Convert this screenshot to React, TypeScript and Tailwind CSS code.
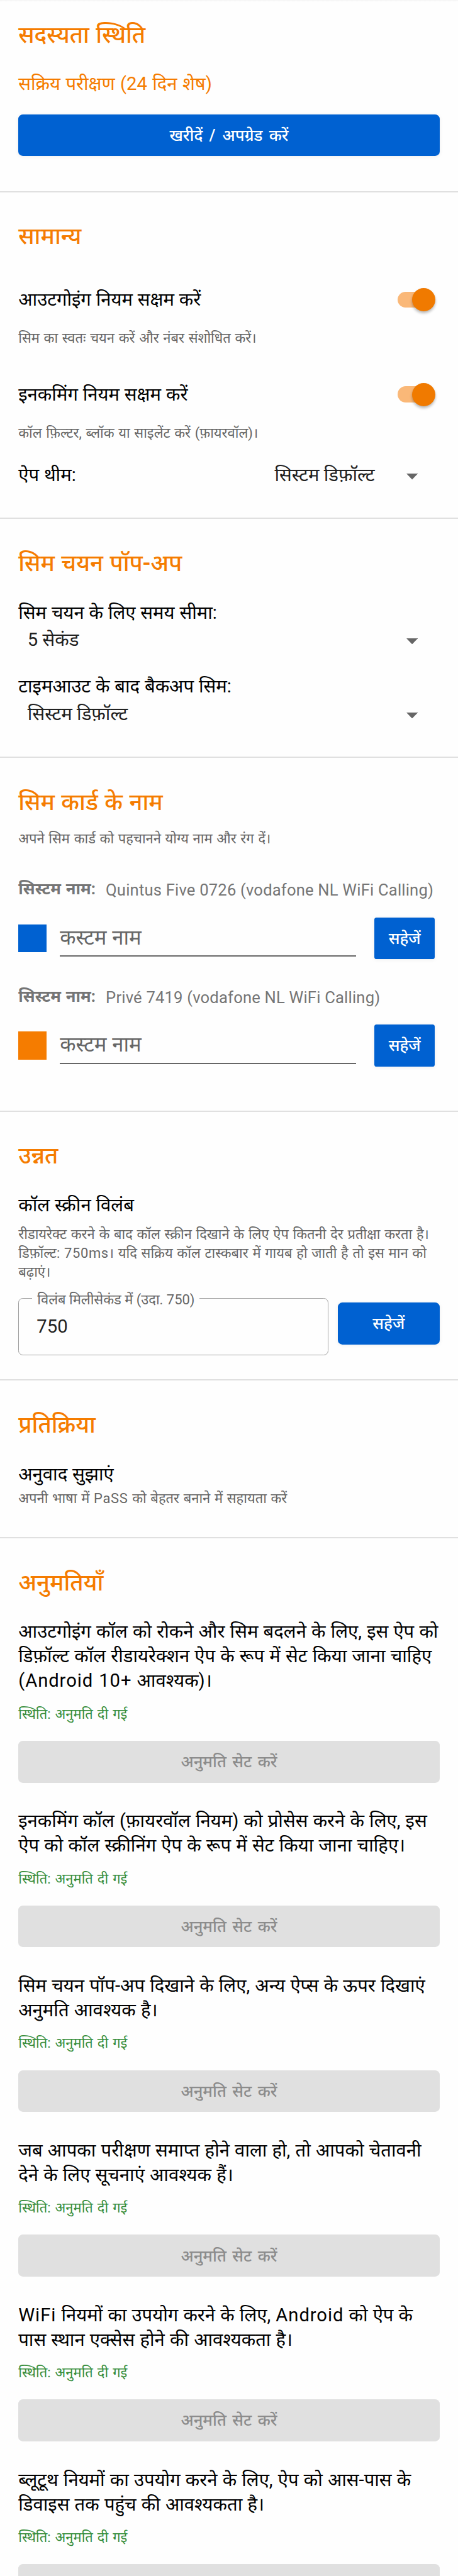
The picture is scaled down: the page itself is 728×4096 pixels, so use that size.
import type { ReactNode } from 'react'
import clsx from 'clsx'

const permissions: ReactNode[] = [
  <>
    आउटगोइंग कॉल को रोकने और सिम बदलने के लिए, इस ऐप को
    <br />
    डिफ़ॉल्ट कॉल रीडायरेक्शन ऐप के रूप में सेट किया जाना चाहिए
    <br />
    <Latin>(Android 10+</Latin> आवश्यक)।
  </>,
  <>
    इनकमिंग कॉल (फ़ायरवॉल नियम) को प्रोसेस करने के लिए, इस
    <br />
    ऐप को कॉल स्क्रीनिंग ऐप के रूप में सेट किया जाना चाहिए।
  </>,
  <>
    सिम चयन पॉप-अप दिखाने के लिए, अन्य ऐप्स के ऊपर दिखाएं
    <br />
    अनुमति आवश्यक है।
  </>,
  <>
    जब आपका परीक्षण समाप्त होने वाला हो, तो आपको चेतावनी
    <br />
    देने के लिए सूचनाएं आवश्यक हैं।
  </>,
  <>
    <Latin>WiFi</Latin> नियमों का उपयोग करने के लिए, <Latin>Android</Latin> को ऐप के
    <br />
    पास स्थान एक्सेस होने की आवश्यकता है।
  </>,
  <>
    ब्लूटूथ नियमों का उपयोग करने के लिए, ऐप को आस-पास के
    <br />
    डिवाइस तक पहुंच की आवश्यकता है।
  </>,
]

// Letter spacing only applies to latin runs, devanagari has to stay connected
function Latin({ children }: { children: ReactNode }) {
  return <span className="tracking-[0.031em]">{children}</span>
}

function Section({ className, title, children }: { className?: string; title: string; children: ReactNode }) {
  return (
    <section className={clsx('border-b-2 border-[#e0e0e0] px-[29.25px]', className)}>
      <h2 className="text-[36.56px] leading-[44px] font-medium text-[#f57c00] [word-spacing:1.4px]">{title}</h2>
      {children}
    </section>
  )
}

function Label({ className, children }: { className?: string; children: ReactNode }) {
  return (
    <p className={clsx('text-[29.25px] leading-[39px] text-black [word-spacing:0.6px]', className)}>{children}</p>
  )
}

function Hint({ className, children }: { className?: string; children: ReactNode }) {
  return (
    <p className={clsx('text-[21.94px] leading-[29.7px] text-[#666666] [word-spacing:1.25px]', className)}>
      {children}
    </p>
  )
}

function Button({ className, children }: { className?: string; children: ReactNode }) {
  return (
    <button
      className={clsx(
        'flex shrink-0 items-center justify-center bg-[#0061d1] text-[25.6px] font-medium text-white shadow-[0_1px_6px_rgba(0,0,0,0.07)] [word-spacing:3.8px]',
        className
      )}
    >
      {children}
    </button>
  )
}

function Toggle() {
  return (
    <div className="relative mr-[6.4px] h-[37px] w-[60px]">
      <div className="absolute top-[5.4px] left-0 h-[25.4px] w-[54px] rounded-full bg-[#fab878]" />
      <div className="absolute top-0 right-0 size-[37px] rounded-full bg-[#f07a00] shadow-[0_3px_4px_rgba(0,0,0,0.28)]" />
    </div>
  )
}

function Caret() {
  return (
    <svg className="mt-[4px] mr-[35px] h-[9.4px] w-[18.2px] fill-[#666666]" viewBox="0 0 10 5" preserveAspectRatio="none">
      <path d="M0 0h10L5 5z" />
    </svg>
  )
}

function SelectRow({ value }: { value: string }) {
  return (
    <div className="mt-[4.7px] flex h-[39px] items-center justify-between pl-[14.6px]">
      <span className="text-[29.25px] leading-[39px] text-[#212121]">{value}</span>
      <Caret />
    </div>
  )
}

function SimRow({ name, color, className }: { name: string; color: string; className: string }) {
  return (
    <div className={className}>
      <div className="flex h-[30px] text-[25.6px] leading-[30px] text-[#757575]">
        <span className="w-[138.8px] shrink-0 font-bold [word-spacing:1.4px]">सिस्टम नाम:</span>
        <span className="pt-[2px] tracking-[0.19px]">{name}</span>
      </div>
      <div className="mt-[30.3px] flex h-[66.7px] items-center">
        <div className={clsx('size-[44.6px]', color)} />
        <div className="ml-[21.4px] h-[62.9px] w-[470.8px] self-start border-b-2 border-[#666666] pt-[9px] text-[32.9px] leading-[46px] text-[#666666] [word-spacing:0.6px]">
          कस्टम नाम
        </div>
        <Button className="ml-[29.2px] h-[66.7px] w-[96px] rounded-[3.6px]">सहेजें</Button>
      </div>
    </div>
  )
}

export default function App() {
  return (
    <div className="h-[4096px] w-[728px] overflow-hidden bg-[#fefefe] font-[Roboto,'Noto_Sans',sans-serif] whitespace-nowrap">
      <Section title="सदस्यता स्थिति" className="h-[306px] bg-[linear-gradient(#f4f4f4,#fefefe_3px)] pt-[33.8px]">
        <p className="mt-[36.4px] text-[29.25px] leading-[39px] text-[#f57c00] [word-spacing:1.1px]">
          सक्रिय परीक्षण (24 दिन शेष)
        </p>
        <Button className="mt-[28.9px] h-[66.4px] w-full rounded-[7.3px]">
          <span>
            खरीदें <span className="tracking-[1px]">/</span> अपग्रेड करें
          </span>
        </Button>
      </Section>

      <Section title="सामान्य" className="h-[519px] pt-[48.3px]">
        <div className="mt-[59.2px] flex h-[39px] items-center justify-between">
          <Label>आउटगोइंग नियम सक्षम करें</Label>
          <Toggle />
        </div>
        <Hint className="mt-[26.6px]">सिम का स्वतः चयन करें और नंबर संशोधित करें।</Hint>
        <div className="mt-[55.2px] flex h-[39px] items-center justify-between">
          <Label>इनकमिंग नियम सक्षम करें</Label>
          <Toggle />
        </div>
        <Hint className="mt-[26.7px]">कॉल फ़िल्टर, ब्लॉक या साइलेंट करें (फ़ायरवॉल)।</Hint>
        <div className="mt-[33px] flex h-[39px] items-center">
          <Label>ऐप थीम:</Label>
          <span className="mr-[50px] ml-auto text-[29.25px] leading-[39px] text-[#212121]">सिस्टम डिफ़ॉल्ट</span>
          <Caret />
        </div>
      </Section>

      <Section title="सिम चयन पॉप-अप" className="h-[380px] pt-[49.2px]">
        <Label className="mt-[36.4px]">सिम चयन के लिए समय सीमा:</Label>
        <SelectRow value="5 सेकंड" />
        <Label className="mt-[35px]">टाइमआउट के बाद बैकअप सिम:</Label>
        <SelectRow value="सिस्टम डिफ़ॉल्ट" />
      </Section>

      <Section title="सिम कार्ड के नाम" className="h-[563px] pt-[48.9px]">
        <Hint className="mt-[21.3px]">अपने सिम कार्ड को पहचानने योग्य नाम और रंग दें।</Hint>
        <SimRow className="mt-[49.4px]" name="Quintus Five 0726 (vodafone NL WiFi Calling)" color="bg-[#0061d1]" />
        <SimRow className="mt-[43.6px]" name="Privé 7419 (vodafone NL WiFi Calling)" color="bg-[#f57c00]" />
      </Section>

      <Section title="उन्नत" className="h-[427px] pt-[48.4px]">
        <Label className="mt-[36.5px]">कॉल स्क्रीन विलंब</Label>
        <Hint className="mt-[12.6px]">
          रीडायरेक्ट करने के बाद कॉल स्क्रीन दिखाने के लिए ऐप कितनी देर प्रतीक्षा करता है।
          <br />
          डिफ़ॉल्ट: <Latin>750ms</Latin>। यदि सक्रिय कॉल टास्कबार में गायब हो जाती है तो इस मान को
          <br />
          बढ़ाएं।
        </Hint>
        <div className="mt-[26.5px] flex">
          <div className="relative flex h-[91.1px] w-[493px] items-center rounded-[7.3px] border-[1.6px] border-[#9e9e9e] pl-[28px]">
            <span className="absolute top-[-13px] left-[21px] bg-[#fefefe] px-[8px] text-[21.94px] leading-[30px] text-[#666666]">
              विलंब मिलीसेकंड में (उदा. 750)
            </span>
            <span className="text-[29.25px] text-[#212121]">750</span>
          </div>
          <Button className="mt-[7.2px] ml-[14.6px] h-[66.5px] w-[162px] rounded-[7.3px]">सहेजें</Button>
        </div>
      </Section>

      <Section title="प्रतिक्रिया" className="h-[251px] pt-[48.8px]">
        <Label className="mt-[36.9px]">अनुवाद सुझाएं</Label>
        <Hint className="mt-[4.1px]">
          अपनी भाषा में <Latin>PaSS</Latin> को बेहतर बनाने में सहायता करें
        </Hint>
      </Section>

      <Section title="अनुमतियाँ" className="border-b-0 pt-[48.6px]">
        <div className="mt-[36.9px] flex flex-col gap-[41.8px]">
          {permissions.map((text, i) => (
            <div key={i}>
              <p className="text-[29.25px] leading-[38.95px] text-black [word-spacing:0.9px]">{text}</p>
              <p className="mt-[18.4px] text-[21.94px] leading-[29.7px] text-[#388e3c] [word-spacing:1.6px]">
                स्थिति: अनुमति दी गई
              </p>
              <button
                disabled
                className="mt-[27.4px] h-[66.7px] w-full rounded-[7.3px] bg-[#e0e0e0] text-[25.6px] font-medium text-[#8c8c8c] [word-spacing:3.1px]"
              >
                अनुमति सेट करें
              </button>
            </div>
          ))}
        </div>
      </Section>
    </div>
  )
}
